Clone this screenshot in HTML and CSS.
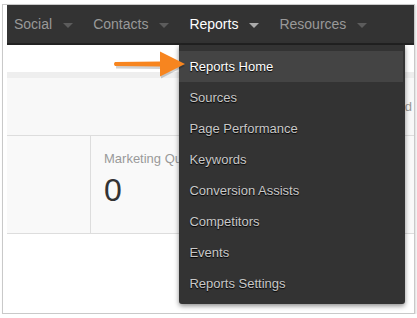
FILE: index.html
```html
<!DOCTYPE html>
<html lang="en">
<head>
    <meta charset="UTF-8">
    <meta name="viewport" content="width=device-width, initial-scale=1.0">
    <title>Reports menu</title>
    <link rel="stylesheet" href="styles.css">
</head>
<body>
    <div class="frame">
        <!-- top navigation -->
        <div class="nav">
            <div class="nav-item first"><span>Social</span><i class="caret"></i></div>
            <div class="nav-item"><span>Contacts</span><i class="caret"></i></div>
            <div class="nav-item active">
                <span>Reports</span><i class="caret"></i>
                <ul class="dropdown">
                    <li class="selected">Reports Home</li>
                    <li>Sources</li>
                    <li>Page Performance</li>
                    <li>Keywords</li>
                    <li>Conversion Assists</li>
                    <li>Competitors</li>
                    <li>Events</li>
                    <li>Reports Settings</li>
                </ul>
            </div>
            <div class="nav-item"><span>Resources</span><i class="caret"></i></div>
        </div>

        <!-- page behind the menu -->
        <div class="page">
            <div class="band"></div>
            <div class="strip"></div>
            <div class="panel"><span class="panel-label">d</span></div>
            <div class="stats">
                <div class="stat blank"></div>
                <div class="stat">
                    <div class="stat-label">Marketing Qualified Leads</div>
                    <div class="stat-value">0</div>
                </div>
                <div class="stat rest"></div>
            </div>
        </div>

        <!-- callout arrow -->
        <svg class="callout" width="74" height="30" viewBox="0 0 74 30">
            <path d="M2 12.5 L47 11 L47 1.5 L71 13 L47 25.5 L47 16 L2 15.5 Z" fill="#000" opacity="0.18" transform="translate(1 2)"/>
            <path d="M2 11 L47 10.5 L47 0.5 L72 13 L47 25.5 L47 15.5 L2 15 Q0 13 2 11 Z" fill="#f7851f"/>
        </svg>
    </div>
</body>
</html>
```

FILE: styles.css
```css
/* screenshot frame */
body {
    margin: 0;
    background-color: #fff;
    font-family: "Liberation Sans", Arial, sans-serif;
}

.frame {
    position: relative;
    box-sizing: border-box;
    width: 413px;
    height: 310px;
    margin: 4px 0 0 2px;
    padding-left: 4px;
    border: 1px solid #c9c9c9;
    background-color: #fff;
    box-shadow: 1px 1px 2px rgba(0, 0, 0, 0.15);
}

/* navigation bar */
.nav {
    display: flex;
    height: 38px;
    background-color: #333;
    border-bottom: 2px solid #222;
}

.nav-item {
    position: relative;
    display: flex;
    align-items: center;
    padding: 0 10px;
    font-size: 14px;
    color: #999;
}

.nav-item.first {
    padding-left: 7px;
}

.nav-item.active {
    color: #fff;
}

.caret {
    width: 0;
    height: 0;
    margin-left: 11px;
    margin-top: 2px;
    border-left: 5px solid transparent;
    border-right: 5px solid transparent;
    border-top: 5px solid #5c5c5c;
}

.nav-item.active .caret {
    border-top-color: #aaa;
}

/* dropdown menu */
.dropdown {
    position: absolute;
    top: 40px;
    left: 0;
    z-index: 2;
    width: 226px;
    margin: 0;
    padding: 6px 0 5px;
    list-style: none;
    background-color: #333;
    border-radius: 0 0 3px 3px;
    box-shadow: 0 2px 5px rgba(0, 0, 0, 0.45);
}

.dropdown li {
    height: 31px;
    line-height: 31px;
    margin-right: 2px;
    padding-left: 10px;
    font-size: 13px;
    color: #c8c8c8;
    text-shadow: 0 1px 1px #000;
}

.dropdown li.selected {
    background-color: #444;
    color: #fff;
}

/* page content */
.band {
    height: 27px;
    background-color: #fff;
}

.strip {
    height: 6px;
    background-color: #eee;
}

.panel {
    display: flex;
    align-items: center;
    justify-content: flex-end;
    height: 57px;
    padding-right: 2px;
    background-color: #f8f8f8;
    border-bottom: 1px solid #ddd;
}

.panel-label {
    font-size: 13px;
    color: #999;
}

.stats {
    display: flex;
    height: 97px;
    background-color: #f9f9f9;
    border-bottom: 1px solid #ddd;
}

.stat {
    flex: 0 0 88px;
    box-sizing: border-box;
    padding: 15px 0 0 13px;
    white-space: nowrap;
    overflow: hidden;
}

.stat.blank {
    flex: 0 0 84px;
    padding: 0;
    border-right: 1px solid #ddd;
}

.stat.rest {
    flex: 1;
    padding: 0;
}

.stat-label {
    font-size: 13px;
    line-height: 16px;
    color: #999;
}

.stat-value {
    margin-top: 5px;
    font-size: 32px;
    line-height: 36px;
    color: #333;
}

/* orange callout arrow */
.callout {
    position: absolute;
    left: 110px;
    top: 46px;
    z-index: 3;
}
```
